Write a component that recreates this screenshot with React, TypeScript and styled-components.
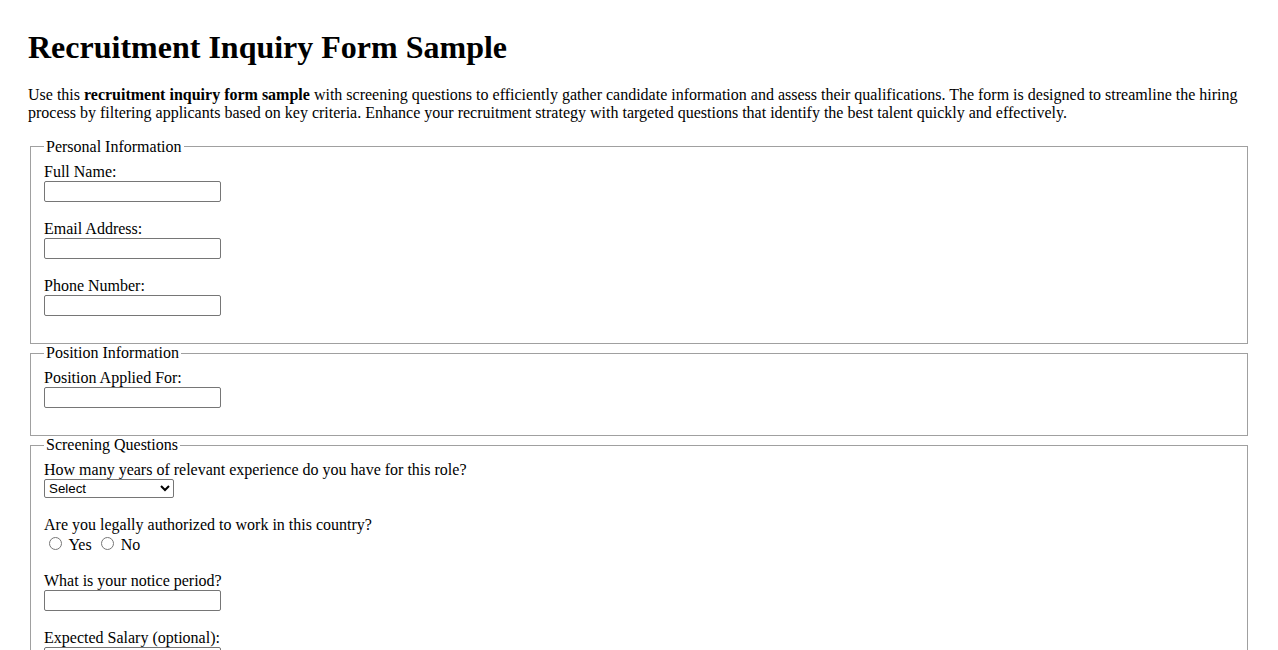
import React from 'react';
import styled, { createGlobalStyle } from 'styled-components';

const GlobalStyle = createGlobalStyle`
  body {
    margin: 8px;
    font-family: "Liberation Serif", "Times New Roman", serif;
    font-size: 16px;
    color: #000;
    background: #fff;
  }
`;

const Page = styled.div`
  padding: 0 20px;
`;

const Title = styled.h1`
  font-size: 32px;
  font-weight: bold;
  margin: 21.44px 0 19.5px;
`;

const Intro = styled.p`
  margin: 16px 0;
`;

const Section = styled.fieldset`
  margin: 0 2px;
  padding: 6.6px 13px 9.5px;
  border: 1px solid #a0a0a0;
  min-inline-size: min-content;
`;

const Legend = styled.legend`
  padding: 0 2px;
`;

const Field = styled.div`
  margin-bottom: 18px;
`;

const Label = styled.label`
  display: block;
`;

const TextInput = styled.input`
  font-family: "Liberation Sans", Arial, sans-serif;
  font-size: 13.333px;
  width: 177px;
  height: 21px;
  box-sizing: border-box;
  padding: 1px 2px;
  border: 1px solid #767676;
  border-radius: 2px;
  margin: 0;
`;

const Select = styled.select`
  font-family: "Liberation Sans", Arial, sans-serif;
  font-size: 13.333px;
  width: 130px;
  height: 19px;
  box-sizing: border-box;
  border: 1px solid #767676;
  border-radius: 2px;
  margin: 0;
  background: #fff;
  color: #000;
`;

const Radio = styled.input`
  margin: 3px 3px 0 5px;
  width: 13px;
  height: 13px;
`;

type TextFieldProps = { id: string; label: string; type?: string };

const TextField = ({ id, label, type = 'text' }: TextFieldProps) => (
  <Field>
    <Label htmlFor={id}>{label}</Label>
    <TextInput id={id} name={id} type={type} />
  </Field>
);

const App = () => {
  return (
    <Page>
      <GlobalStyle />
      <Title>Recruitment Inquiry Form Sample</Title>
      <Intro>
        Use this <strong>recruitment inquiry form sample</strong> with screening
        questions to efficiently gather candidate information and assess their
        qualifications. The form is designed to streamline the hiring process by
        filtering applicants based on key criteria. Enhance your recruitment
        strategy with targeted questions that identify the best talent quickly
        and effectively.
      </Intro>
      <form>
        <Section>
          <Legend>Personal Information</Legend>
          <TextField id="fullName" label="Full Name:" />
          <TextField id="email" label="Email Address:" type="email" />
          <TextField id="phone" label="Phone Number:" type="tel" />
        </Section>
        <Section>
          <Legend>Position Information</Legend>
          <TextField id="position" label="Position Applied For:" />
        </Section>
        <Section>
          <Legend>Screening Questions</Legend>
          <Field>
            <Label htmlFor="experience">
              How many years of relevant experience do you have for this role?
            </Label>
            <Select id="experience" name="experience" defaultValue="">
              <option value="">Select</option>
              <option value="0-1">0-1 years</option>
              <option value="2-4">2-4 years</option>
              <option value="5-7">5-7 years</option>
              <option value="8+">8+ years</option>
            </Select>
          </Field>
          <Field>
            <Label>Are you legally authorized to work in this country?</Label>
            <Radio type="radio" id="authYes" name="authorized" value="yes" />{' '}
            <label htmlFor="authYes">Yes</label>{' '}
            <Radio type="radio" id="authNo" name="authorized" value="no" />{' '}
            <label htmlFor="authNo">No</label>
          </Field>
          <TextField id="notice" label="What is your notice period?" />
          <TextField id="salary" label="Expected Salary (optional):" />
        </Section>
      </form>
    </Page>
  );
};

export default App;
